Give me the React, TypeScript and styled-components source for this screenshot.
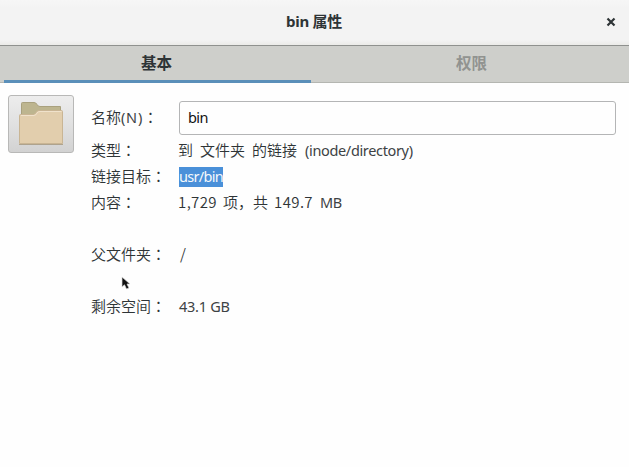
import React from "react";
import styled, { createGlobalStyle } from "styled-components";

const GlobalStyle = createGlobalStyle`
  * { box-sizing: border-box; }
  body { margin: 0; background: #fefefe; }
`;

const Dialog = styled.main`
  position: relative;
  width: 629px;
  height: 467px;
  overflow: hidden;
  background: #fefefe;
  color: #2e3436;
  font: 15px/26px "Noto Sans CJK SC", sans-serif;
  white-space: pre;
`;

const Header = styled.header`
  display: grid;
  grid-template-columns: 1fr auto 1fr;
  align-items: center;
  height: 46px;
  padding: 0 13px 2px 12px;
  background: linear-gradient(#f6f6f6, #f3f3f3 8px, #f3f3f3 40px, #ebebe8);
  border-bottom: 1px solid #8f918e;
`;

const Title = styled.h1`
  grid-column: 2;
  margin: 0 0 2px;
  font: bold 15px/26px "Noto Sans", "Noto Sans CJK SC", sans-serif;
  letter-spacing: -0.3px;
`;

const Close = styled.button`
  justify-self: end;
  display: flex;
  padding: 0;
  border: 0;
  background: none;
  color: #2e3436;
`;

const Tabs = styled.nav`
  display: grid;
  grid-template-columns: 307px 1fr;
  height: 37px;
  padding: 0 0 0 4px;
  background: #cecfcb;
  box-shadow: inset 0 -1px #b4b6b1;
`;

const Tab = styled.button<{ $active?: boolean }>`
  padding: 0 ${(p) => (p.$active ? "2px 2px 0" : "0 2px 3px")};
  border: 0;
  border-bottom: 3px solid ${(p) => (p.$active ? "#5a8fb9" : "transparent")};
  background: none;
  color: ${(p) => (p.$active ? "#2e3436" : "#919390")};
  font: bold 15.5px/30px "Noto Sans CJK SC", sans-serif;
`;

const Content = styled.section`
  display: flex;
  align-items: flex-start;
  padding: 12px 13px 0 8px;
`;

const IconButton = styled.button`
  display: flex;
  justify-content: center;
  align-items: center;
  flex: none;
  width: 66px;
  height: 58px;
  margin-right: 17px;
  padding: 0;
  border: 1px solid #b8b8b7;
  border-radius: 3px;
  background: linear-gradient(#ededed, #dedede 60%, #d2d2d2);
`;

const Form = styled.div`
  display: grid;
  grid-template-columns: 88px 437px;
  grid-template-rows: 36px;
  grid-auto-rows: 26px;
  align-items: center;
  padding-top: 6px;
`;

const Label = styled.label<{ $row: number }>`
  grid-column: 1;
  grid-row: ${(p) => p.$row};
  align-self: ${(p) => (p.$row === 1 ? "start" : "center")};
  padding-top: ${(p) => (p.$row === 1 ? 3 : 0)}px;
  font-weight: 350;
`;

const Colon = styled.span`
  font-family: "Noto Sans CJK TC", sans-serif;
`;

const Value = styled.div<{ $row: number }>`
  grid-column: 2;
  grid-row: ${(p) => p.$row};
  align-self: ${(p) => (p.$row === 1 ? "start" : "center")};
  display: flex;
  align-items: center;
`;

const Entry = styled.input`
  width: 437px;
  height: 34px;
  padding: 0 8px 2px;
  border: 1px solid #b4b5b6;
  border-radius: 3px;
  background: #fefefe;
  color: #111;
  font: 14.5px "Noto Sans", sans-serif;
  letter-spacing: -0.6px;
  outline: none;
`;

const Latin = styled.span<{ $gap?: number; $track?: number }>`
  margin-left: ${(p) => p.$gap ?? 0}px;
  color: #3d4244;
  font-family: "Noto Sans", sans-serif;
  font-size: 14.5px;
  font-weight: 400;
  letter-spacing: ${(p) => p.$track ?? -0.35}px;
`;

const Han = styled.span<{ $gap?: number }>`
  margin-left: ${(p) => p.$gap ?? 0}px;
  font-weight: 350;
`;

const Digits = styled.span<{ $gap?: number; $track?: number }>`
  margin-left: ${(p) => p.$gap ?? 0}px;
  font-weight: 350;
  letter-spacing: ${(p) => p.$track ?? 0.4}px;
`;

const Selection = styled.span`
  width: 44px;
  height: 20px;
  margin-top: 1px;
  background: #4a90d9;
  color: #f4f8fc;
  font: 14.5px/19px "Noto Sans", sans-serif;
  letter-spacing: -0.7px;
`;

const Pointer = styled.svg`
  position: absolute;
  left: 120px;
  top: 275px;
`;

function FolderIcon() {
  return (
    <svg width="46" height="46" viewBox="0 0 46 46">
      <path d="M3.5 42V2.5Q3.5 1.5 4.5 1.5H16Q18 1.5 19 3.5T22 5.500H42.500V42Z" fill="#bdb58f" stroke="#a9a17e" />
      <path d="M1.500 42.500V14.500Q1.500 13.500 2.500 13.500H15Q17 13.500 18 11.500T21 9.500H43.500Q44.500 9.500 44.500 10.500V42.500Z" fill="#e2cead" stroke="#c9b594" />
      <path d="M3 14.500H16Q18.500 14 19 12Q20 10.500 22 10.500H43.500" fill="none" stroke="#f0e2cb" />
      <path d="M1 43.500H45" stroke="#aea38e" />
    </svg>
  );
}

export default function App() {
  return (
    <>
      <GlobalStyle />
      <Dialog>
        <Header>
          <Title>bin 属性</Title>
          <Close aria-label="关闭">
            <svg width="10" height="10" viewBox="0 0 10 10">
              <path d="M1.500 1.500L8.500 8.500M8.500 1.500L1.500 8.500" stroke="currentColor" strokeWidth="2.200" />
            </svg>
          </Close>
        </Header>
        <Tabs>
          <Tab $active>基本</Tab>
          <Tab>权限</Tab>
        </Tabs>
        <Content>
          <IconButton aria-label="bin"><FolderIcon /></IconButton>
          <Form>
            <Label $row={1}>名称<Latin $track={0.75}>(N)</Latin><Colon>：</Colon></Label>
            <Value $row={1}><Entry defaultValue="bin" /></Value>
            <Label $row={2}>类型<Colon>：</Colon></Label>
            <Value $row={2}>
              <Han $gap={-1}>到</Han><Han $gap={7}>文件夹</Han><Han $gap={7}>的链接</Han>
              <Latin $gap={8}>(inode/directory)</Latin>
            </Value>
            <Label $row={3}>链接目标<Colon>：</Colon></Label>
            <Value $row={3}><Selection>usr/bin</Selection></Value>
            <Label $row={4}>内容<Colon>：</Colon></Label>
            <Value $row={4}>
              <Digits $gap={-1}>1,729</Digits><Han $gap={6}>项，共</Han>
              <Digits $gap={6}>149.7</Digits><Latin $gap={7}>MB</Latin>
            </Value>
            <Label $row={6}>父文件夹<Colon>：</Colon></Label>
            <Value $row={6}><Digits $gap={1}>/</Digits></Value>
            <Label $row={8}>剩余空间<Colon>：</Colon></Label>
            <Value $row={8}><Latin $track={-0.25}>43.1 GB</Latin></Value>
          </Form>
        </Content>
        <Pointer width="12" height="16" viewBox="0 0 12 16">
          <path d="M2 2V12L4.500 9.800L6.500 14L9 13L7 9H10Z" fill="#111" stroke="#ddd" strokeWidth=".7" />
        </Pointer>
      </Dialog>
    </>
  );
}
